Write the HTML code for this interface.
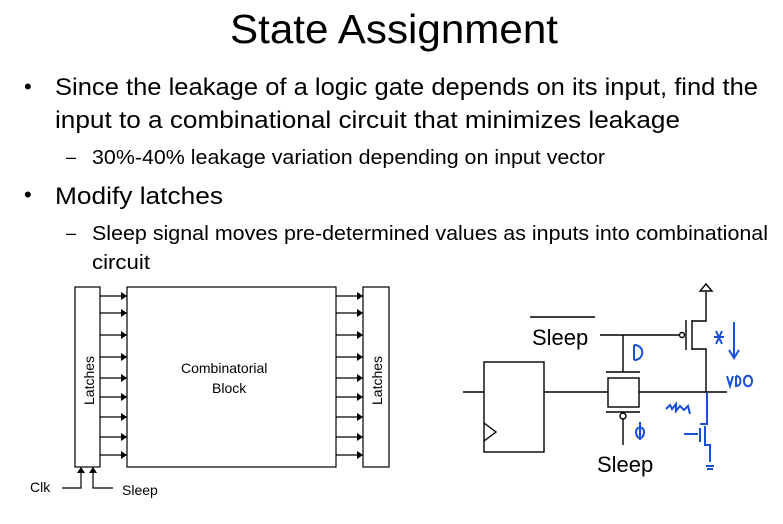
<!DOCTYPE html>
<html><head><meta charset="utf-8"><style>
html,body{margin:0;padding:0;background:#fff;width:783px;height:524px;overflow:hidden}
svg{display:block}
text{font-family:"Liberation Sans",sans-serif;fill:#000}
</style></head><body>
<svg width="783" height="524" viewBox="0 0 783 524" xmlns="http://www.w3.org/2000/svg">
<defs><marker id="a" markerWidth="6" markerHeight="8" refX="6" refY="4" orient="auto" markerUnits="userSpaceOnUse"><path d="M0,0 L6,4 L0,8 z" fill="#000"/></marker></defs>
<text x="230" y="43" font-size="41" textLength="328" lengthAdjust="spacingAndGlyphs">State Assignment</text>
<text x="24" y="94" font-size="22">•</text>
<text x="55" y="95" font-size="24" textLength="703" lengthAdjust="spacingAndGlyphs">Since the leakage of a logic gate depends on its input, find the</text>
<text x="55" y="128" font-size="24" textLength="625" lengthAdjust="spacingAndGlyphs">input to a combinational circuit that minimizes leakage</text>
<text x="66" y="163" font-size="18">–</text>
<text x="92" y="164" font-size="20" textLength="513" lengthAdjust="spacingAndGlyphs">30%-40% leakage variation depending on input vector</text>
<text x="24" y="202" font-size="22">•</text>
<text x="55" y="204" font-size="24" textLength="168" lengthAdjust="spacingAndGlyphs">Modify latches</text>
<text x="66" y="239" font-size="18">–</text>
<text x="92" y="240" font-size="20" textLength="676" lengthAdjust="spacingAndGlyphs">Sleep signal moves pre-determined values as inputs into combinational</text>
<text x="92" y="269" font-size="20" textLength="58" lengthAdjust="spacingAndGlyphs">circuit</text>

<g stroke="#000" stroke-width="1.2" fill="none">
<rect x="75" y="287" width="25" height="180"/>
<rect x="127" y="287" width="209" height="180"/>
<rect x="363" y="287" width="26" height="180"/>
<g marker-end="url(#a)">
<line x1="100" y1="296" x2="127" y2="296"/><line x1="100" y1="313" x2="127" y2="313"/><line x1="100" y1="335" x2="127" y2="335"/><line x1="100" y1="357" x2="127" y2="357"/><line x1="100" y1="378" x2="127" y2="378"/><line x1="100" y1="397" x2="127" y2="397"/><line x1="100" y1="417" x2="127" y2="417"/><line x1="100" y1="437" x2="127" y2="437"/><line x1="100" y1="455" x2="127" y2="455"/>
<line x1="336" y1="296" x2="363" y2="296"/><line x1="336" y1="313" x2="363" y2="313"/><line x1="336" y1="335" x2="363" y2="335"/><line x1="336" y1="357" x2="363" y2="357"/><line x1="336" y1="378" x2="363" y2="378"/><line x1="336" y1="397" x2="363" y2="397"/><line x1="336" y1="417" x2="363" y2="417"/><line x1="336" y1="437" x2="363" y2="437"/><line x1="336" y1="455" x2="363" y2="455"/>
<polyline points="62,488 81,488 81,467"/>
<polyline points="113,488 93,488 93,467"/>
</g>
</g>
<text x="181" y="373" font-size="14">Combinatorial</text>
<text x="212" y="393" font-size="14">Block</text>
<text transform="translate(94,405) rotate(-90)" font-size="14">Latches</text>
<text transform="translate(382,405) rotate(-90)" font-size="14">Latches</text>
<text x="30" y="492" font-size="14">Clk</text>
<text x="122" y="495" font-size="14">Sleep</text>

<g stroke="#000" stroke-width="1.4" fill="none">
<rect x="484" y="362" width="60" height="90"/>
<polyline points="484,423 496,432 484,441"/>
<line x1="463" y1="392" x2="484" y2="392"/>
<line x1="544" y1="392" x2="608" y2="392"/>
<rect x="608" y="378" width="31" height="29"/>
<line x1="606" y1="372" x2="640" y2="372"/>
<line x1="606" y1="412" x2="640" y2="412"/>
<line x1="639" y1="392" x2="727" y2="392"/>
<line x1="623" y1="335" x2="623" y2="372"/>
<line x1="600" y1="335" x2="680" y2="335"/>
<circle cx="682" cy="335" r="2.5"/>
<line x1="686" y1="320" x2="686" y2="350"/>
<line x1="692" y1="320" x2="692" y2="350"/>
<polyline points="692,321 706,321 706,292"/>
<polyline points="692,349 706,349 706,392"/>
<polygon points="706,284 700,291 712,291"/>
<circle cx="623" cy="416" r="3"/>
<line x1="623" y1="419" x2="623" y2="445"/>
<line x1="530" y1="317" x2="595" y2="317"/>
</g>
<text x="532" y="345" font-size="22">Sleep</text>
<text x="597" y="472" font-size="22">Sleep</text>
<g stroke="#1a4fd8" stroke-width="2" fill="none">
<path d="M634,345 L634,360 M634,345 C645,345 645,360 634,360"/>
<path d="M716,331 L722,344 M722,331 L716,344 M714,337 L724,337"/>
<path d="M734,322 L734,358 M729,350 L734,358 L739,350"/>
<path d="M727,376 L730,386 L733,376 M736,376 L736,386 C742,386 742,376 736,376 M744,381 C744,374 752,374 752,381 C752,388 744,388 744,381"/>
<path d="M707,393 L707,424 L700,424 M700,428 L700,442 M684,434 L698,434 M705,426 L705,445 L710,445 L710,462"/>
<path d="M666,409 L670,405 L672,409 L676,404 L676,411 L680,406 L684,410 L688,406 L690,414"/>
<path d="M706,466 L714,466 M707,469 L713,469"/>
<path d="M640,422 L640,440 M636,432 C636,440 644,440 644,432 C644,426 636,426 636,432"/>
</g>
</svg>
</body></html>
